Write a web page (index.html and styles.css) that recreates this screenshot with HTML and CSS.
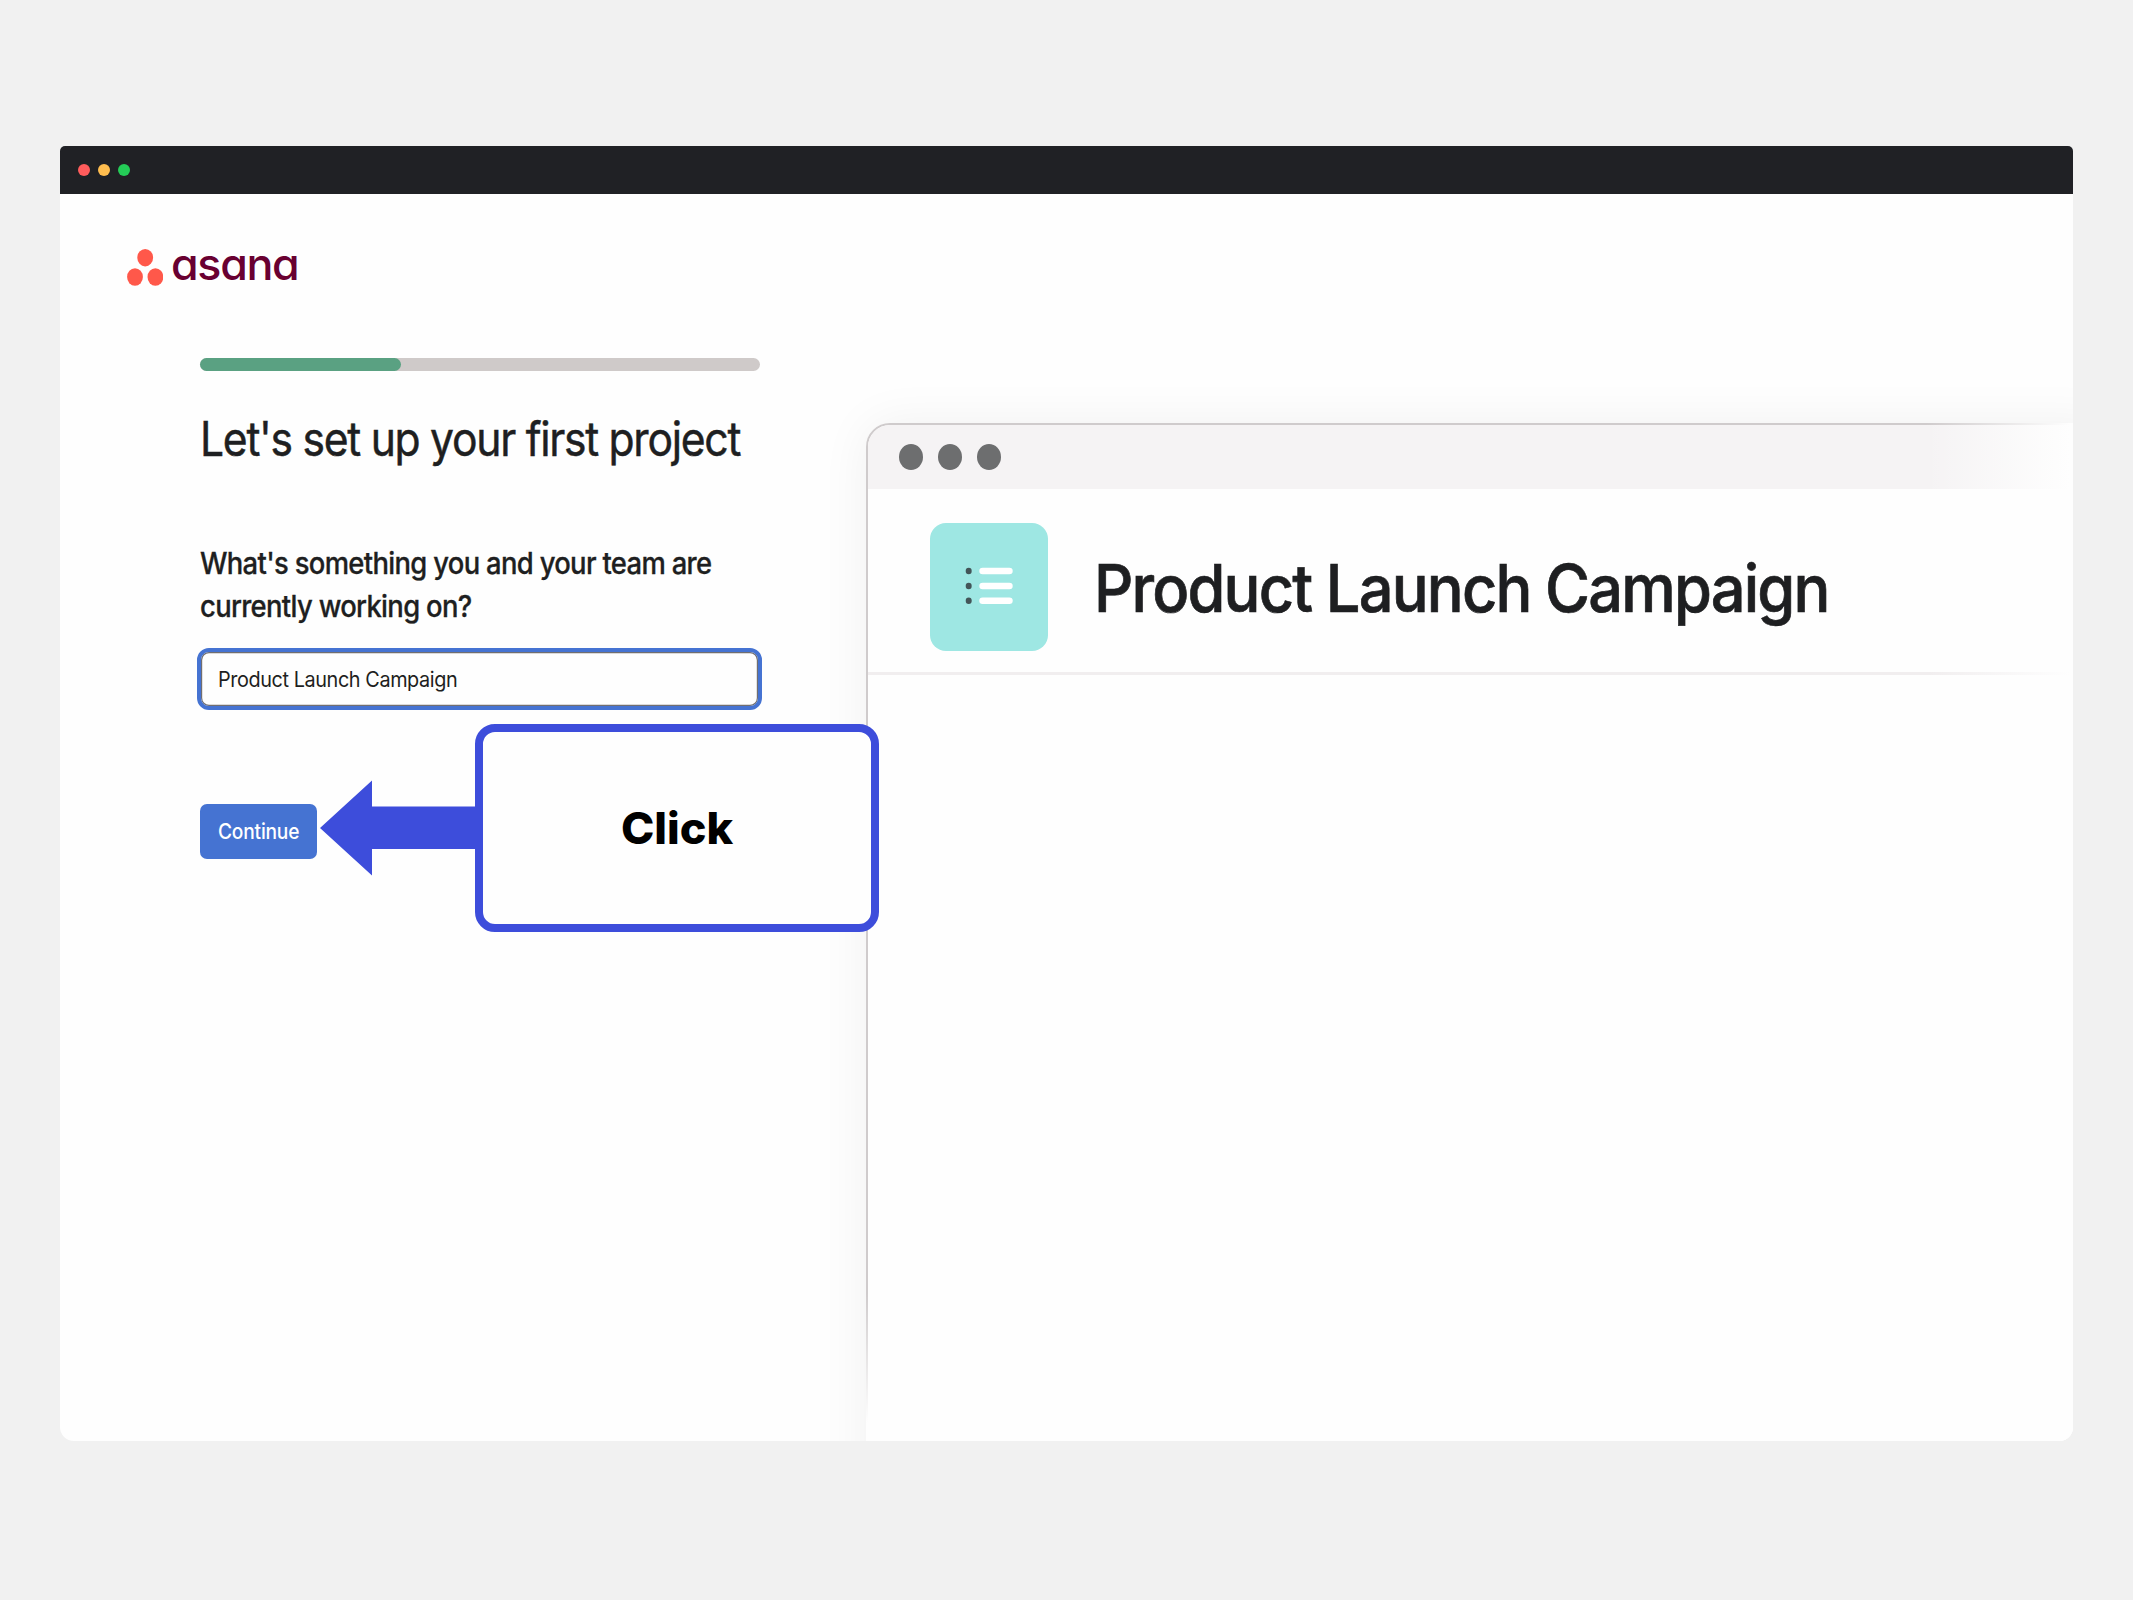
FILE: index.html
```html
<!DOCTYPE html>
<html lang="en">
<head>
<meta charset="utf-8">
<title>Asana – Set up your first project</title>
<link rel="stylesheet" href="styles.css">
</head>
<body>
<div class="window">
  <div class="titlebar"><i class="light red"></i><i class="light amber"></i><i class="light green"></i></div>
  <div class="content">
    <main class="setup">
      <div class="logo">
        <svg class="logo-mark" width="36" height="37" viewBox="0 0 36 37"><g fill="#ff584a"><ellipse cx="18.2" cy="8.7" rx="7.9" ry="8.7"/><ellipse cx="8" cy="28" rx="7.9" ry="8.7"/><ellipse cx="28.4" cy="28" rx="7.9" ry="8.7"/></g></svg>
        <span class="logo-word">asana</span>
      </div>
      <div class="progress"><div class="progress-fill"></div></div>
      <h1 class="heading"><span>Let's set up your first project</span></h1>
      <p class="question"><span>What's something you and your team are<br>currently working on?</span></p>
      <div class="field"><span>Product Launch Campaign</span></div>
      <button class="continue"><span>Continue</span></button>
    </main>
    <section class="preview">
      <div class="preview-bar"><i></i><i></i><i></i></div>
      <div class="preview-head">
        <div class="tile">
          <svg width="48" height="38" viewBox="0 0 48 38"><g fill="#435558"><ellipse cx="3.7" cy="4" rx="3" ry="3.3"/><ellipse cx="3.7" cy="19" rx="3" ry="3.3"/><ellipse cx="3.7" cy="33.8" rx="3" ry="3.3"/></g><g fill="#fff"><rect x="14.3" y=".7" width="33.4" height="6.6" rx="3.3"/><rect x="14.3" y="15.7" width="33.4" height="6.6" rx="3.3"/><rect x="14.3" y="30.5" width="33.4" height="6.6" rx="3.3"/></g></svg>
        </div>
        <h2 class="title"><span>Product Launch Campaign</span></h2>
      </div>
    </section>
  </div>
</div>
<div class="callout">
  <svg class="arrow" width="156" height="96" viewBox="0 0 156 96"><path d="M0 48 52 .5V26.500H156V69H52V95.500Z" fill="#3d4ddb"/></svg>
  <div class="callout-box"><span>Click</span></div>
</div>
</body>
</html>
```
FILE: styles.css
```css
* { box-sizing: border-box; }
body { margin: 0; height: 1600px; padding: 146px 60px 0; background: #f1f1f1; font-family: Inter, "Liberation Sans", sans-serif; color: #1e1f21; overflow: hidden; }
h1, h2, p { margin: 0; font-weight: 400; }
.window { height: 1295px; border-radius: 5px 5px 14px 14px; overflow: hidden; background: #fefefe; }
.titlebar { height: 48px; background: #202125; display: flex; align-items: center; gap: 8px; padding-left: 18px; }
.light { width: 12px; height: 12px; border-radius: 50%; }
.red { background: #ff5c5c; }
.amber { background: #ffbd4f; }
.green { background: #24cc57; }
.content { display: flex; height: 1247px; }
.setup { width: 806px; flex: none; padding: 55px 0 0 67px; }
.logo { display: flex; height: 37px; }
.logo-mark { flex: none; }
.logo-word { margin-left: 7.500px; font-size: 44px; line-height: 31px; font-weight: 500; color: #690031; font-feature-settings: "cv11"; letter-spacing: -.03em; transform: scaleX(1.018); transform-origin: left; }
.progress { margin: 72.400px 0 0 73px; width: 559.500px; height: 12.500px; border-radius: 7px; background: #cfcac9; }
.progress-fill { width: 36%; height: 100%; border-radius: 7px; background: #5aa182; }
.setup span, .title span, .callout-box span { display: inline-block; transform-origin: left; white-space: nowrap; }
.heading { margin: 39px 0 0 73px; font-size: 48px; line-height: 58px; letter-spacing: -.03em; -webkit-text-stroke: .5px #1e1f21; }
.heading span { transform: scaleX(.888); }
.question { margin: 74px 0 0 73px; font-size: 30px; line-height: 42.700px; font-weight: 500; letter-spacing: -.025em; -webkit-text-stroke: .3px #1e1f21; }
.question span { transform: scaleX(.914); }
.field { margin: 21px 0 0 70px; width: 564.500px; height: 61.500px; padding-left: 16.500px; border: 4px solid #4573d2; border-radius: 12px; box-shadow: inset 0 0 0 1.200px #716e6f; font-size: 20.800px; letter-spacing: -.02em; display: flex; align-items: center; }
.field span { transform: scaleX(.953); }
.continue { display: flex; justify-content: flex-start; align-items: center; margin: 94.100px 0 0 73px; padding: 0 0 0 18px; width: 117px; height: 55px; border: 0; border-radius: 7px; background: #4573d2; color: #fff; font: 500 21px Inter, sans-serif; letter-spacing: -.01em; }
.continue span { transform: scaleX(.912); }
.preview { position: relative; flex: none; width: 1240px; height: 1200px; margin-top: 228.500px; border: 2px solid #cfcbcc; border-radius: 24px 0 0 0; box-shadow: 0 0 50px rgba(0,0,0,.06); background: #fefefe; }
.preview::after { content: ""; position: absolute; inset: -2px; background: linear-gradient(to right, transparent 1060px, #fefefe 1204px), linear-gradient(to bottom, transparent 870px, #fefefe 1000px); }
.preview-bar { height: 64px; border-radius: 22px 0 0 0; background: #f5f3f4; display: flex; align-items: center; gap: 14.900px; padding-left: 31px; }
.preview-bar i { width: 24.200px; height: 26px; border-radius: 50%; background: #6d6e6f; }
.preview-head { height: 186px; border-bottom: 3px solid #f1eeef; display: flex; align-items: center; padding: 14px 0 0 62px; }
.tile { flex: none; width: 118px; height: 128px; border-radius: 16px; background: #9ee7e3; display: flex; align-items: center; justify-content: center; padding: 0 0 2px 0; }
.title { margin-left: 46px; padding-top: 1px; font-size: 66px; line-height: 80px; font-weight: 500; letter-spacing: -.03em; -webkit-text-stroke: .7px #1e1f21; }
.title span { transform: scaleX(.93); }
.callout { position: absolute; left: 320px; top: 724px; display: flex; align-items: center; }
.arrow { flex: none; }
.callout-box { margin-left: -1px; width: 404px; height: 208px; border: 8px solid #3d4ddb; border-radius: 20px; background: #fefefe; display: flex; align-items: center; justify-content: center; font-size: 44.500px; font-weight: 800; color: #000; }
.callout-box span { transform-origin: center; transform: translateX(.5px) scaleX(1.01); }
```
